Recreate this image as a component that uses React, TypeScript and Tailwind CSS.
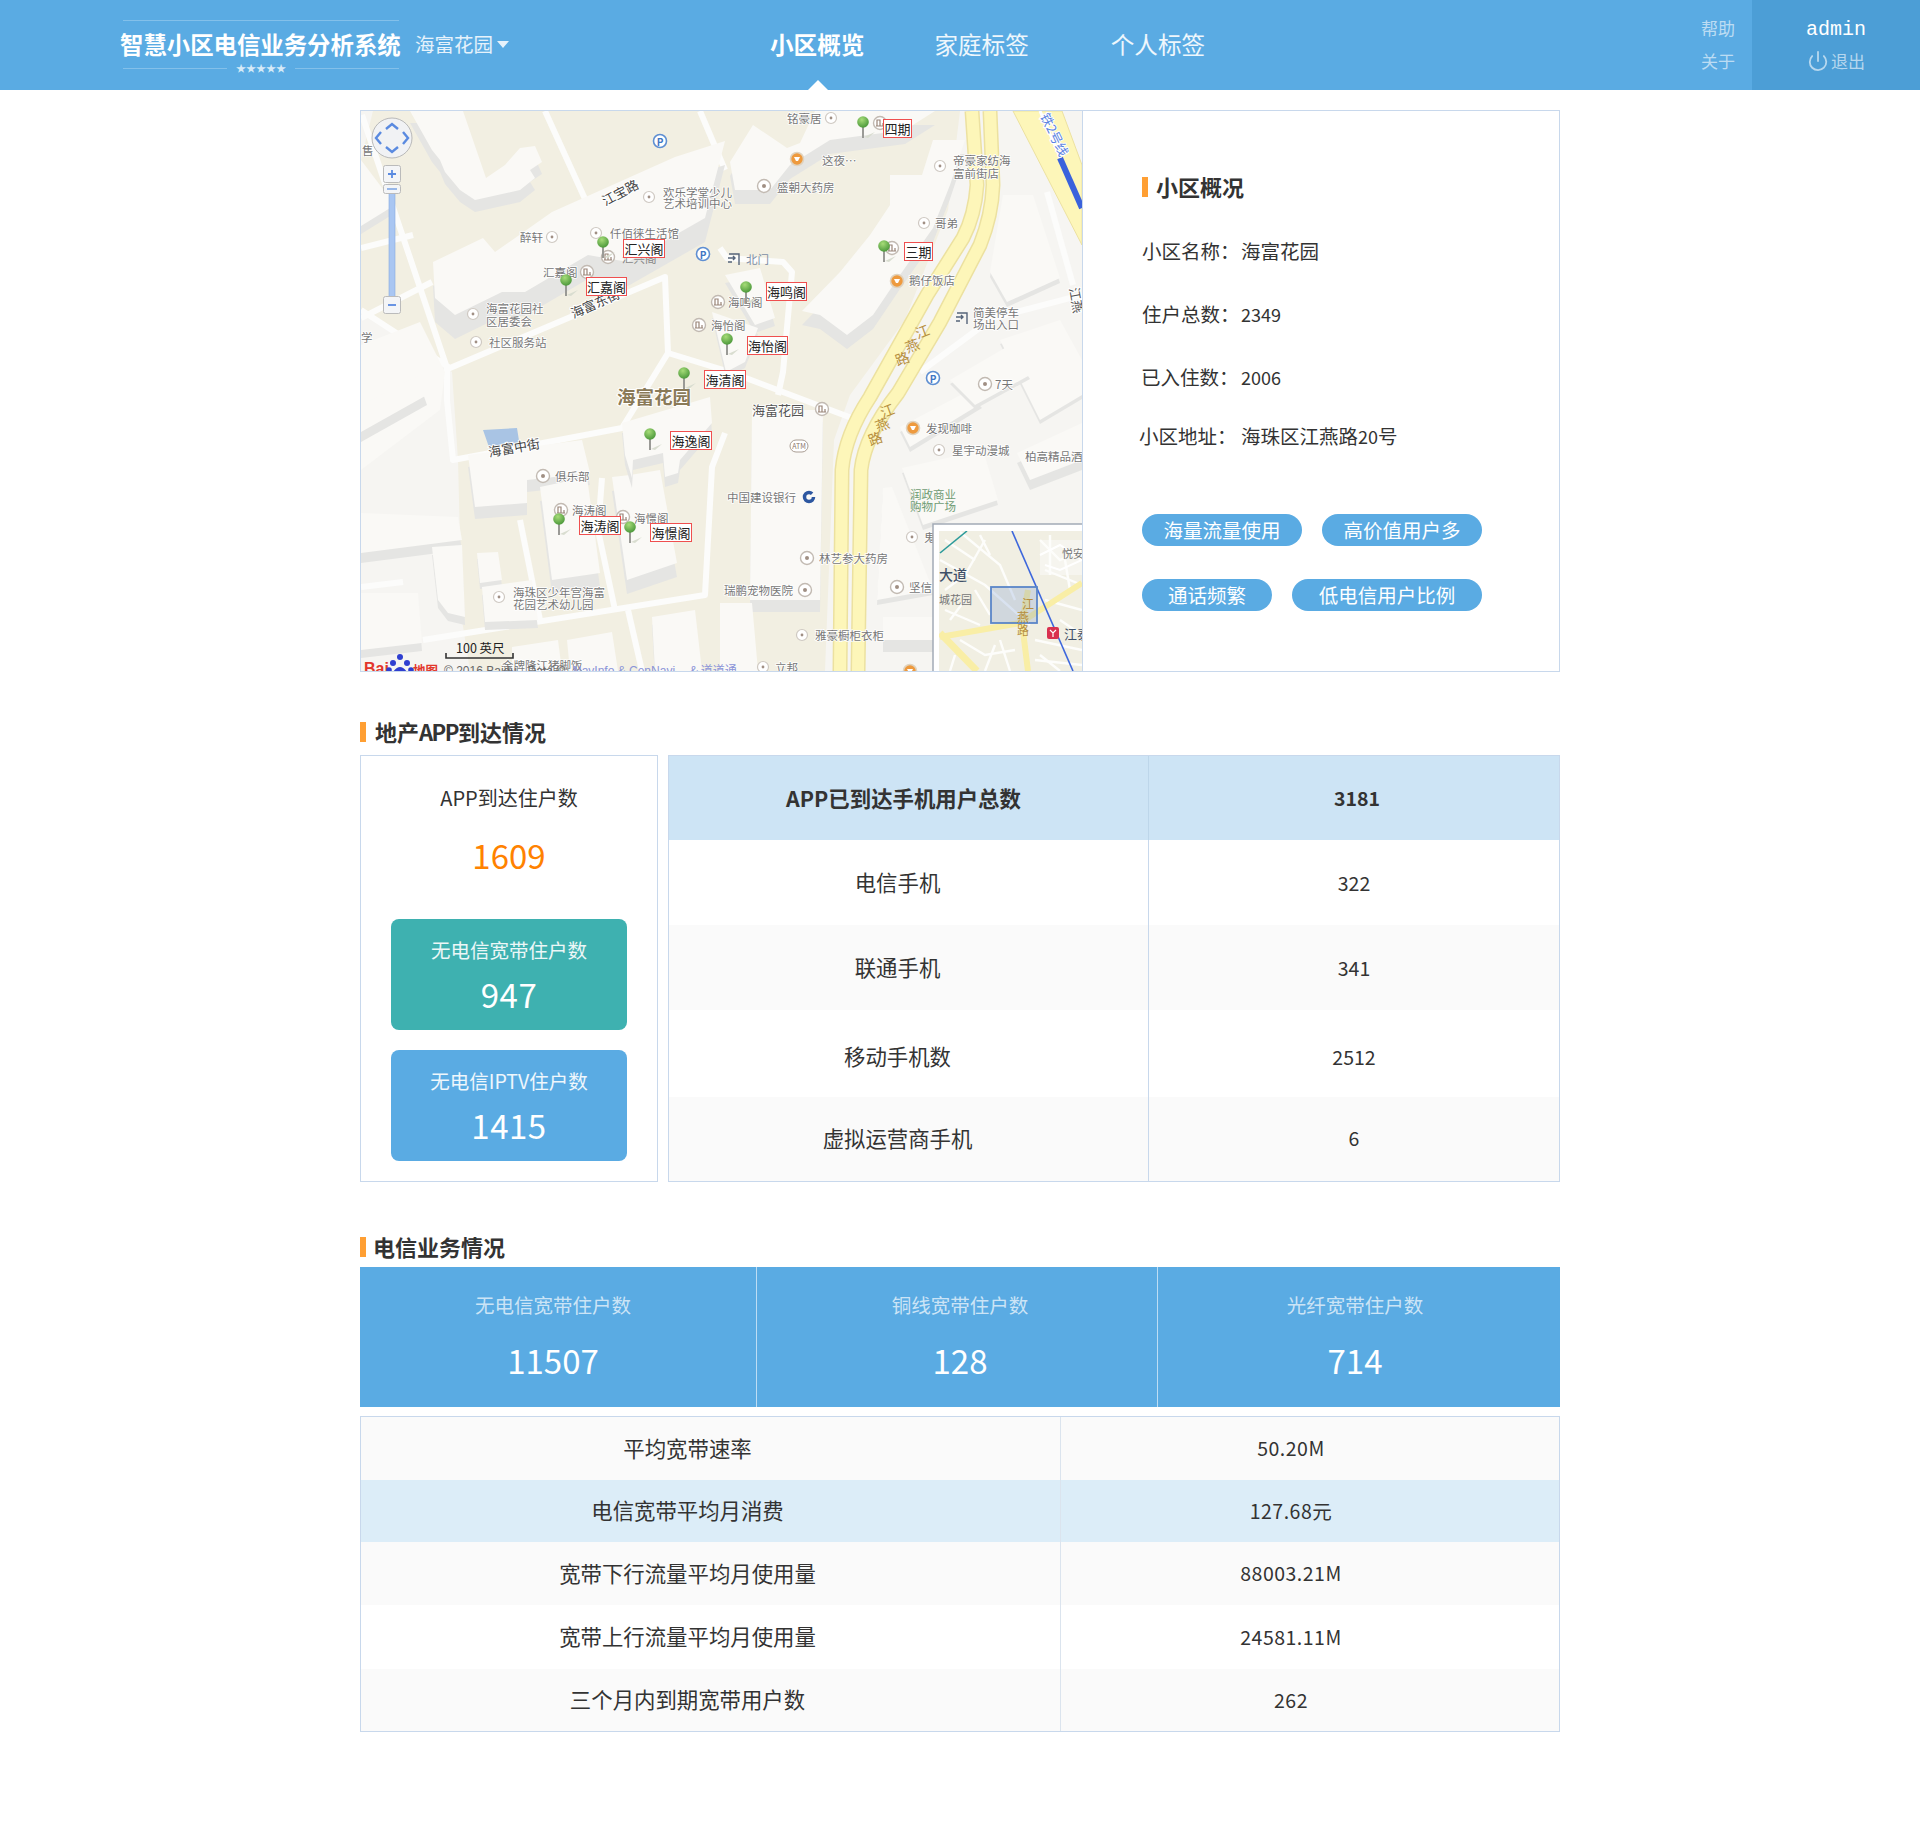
import type { ReactNode } from "react";
import { Power } from "lucide-react";

type Pt = [number, number];
const pts = (p: Pt[]) => p.map((q) => q.join(",")).join(" ");

// building: top face plus a grey side shifted downward
const buildings: { p: Pt[]; d: number }[] = [
    { p: [[410, 111], [463, 111], [486, 178], [505, 165], [520, 148], [535, 146], [542, 162], [530, 170], [535, 178], [520, 190], [475, 200], [460, 190], [445, 172], [440, 160], [432, 150]], d: 12 },
    { p: [[433, 262], [483, 238], [495, 252], [552, 212], [675, 157], [725, 141], [705, 218], [628, 262], [588, 255], [525, 292], [502, 292], [455, 315], [435, 298]], d: 24 },
    { p: [[730, 162], [753, 125], [787, 148], [800, 143], [815, 111], [935, 111], [905, 130], [830, 140], [790, 165], [770, 190], [735, 190]], d: 14 },
    { p: [[890, 175], [922, 175], [933, 140], [965, 140], [950, 185], [933, 228], [900, 275], [873, 315], [847, 335], [820, 315], [802, 311], [840, 272], [870, 235], [890, 205]], d: 14 },
    { p: [[468, 455], [582, 440], [590, 473], [527, 480], [527, 503], [475, 507]], d: 12 },
    { p: [[540, 487], [587, 477], [600, 573], [552, 580]], d: 14 },
    { p: [[612, 477], [630, 475], [660, 470], [677, 563], [627, 580]], d: 14 },
    { p: [[622, 423], [710, 397], [712, 423], [680, 460], [678, 473], [665, 477], [663, 453], [633, 460], [632, 478], [625, 455]], d: 10 },
    { p: [[477, 553], [498, 552], [502, 580], [480, 583]], d: 6 },
    { p: [[482, 587], [532, 580], [538, 620], [485, 622]], d: 8 },
    { p: [[361, 513], [458, 517], [462, 540], [361, 553]], d: 10 },
    { p: [[361, 593], [418, 593], [422, 643], [361, 650]], d: 8 },
    { p: [[432, 547], [462, 545], [465, 617], [448, 613], [438, 600]], d: 8 },
    { p: [[725, 275], [760, 268], [775, 318], [755, 325]], d: 8 },
    { p: [[712, 312], [758, 328], [745, 362], [726, 372]], d: 6 },
    { p: [[752, 410], [823, 410], [820, 600], [750, 600]], d: 12 },
    { p: [[902, 468], [983, 450], [998, 500], [923, 525]], d: 5 },
    { p: [[883, 488], [892, 487], [933, 590], [877, 600]], d: 5 },
    { p: [[1017, 453], [1082, 423], [1082, 460], [1030, 480]], d: 10 },
    { p: [[720, 603], [752, 603], [758, 671], [720, 671]], d: 0 },
    { p: [[883, 617], [933, 617], [933, 640], [883, 640]], d: 12 },
    { p: [[900, 427], [970, 390], [982, 403], [910, 447]], d: 5 },
    { p: [[512, 647], [558, 640], [562, 671], [512, 671]], d: 0 },
    { p: [[567, 640], [612, 632], [618, 671], [570, 671]], d: 0 },
    { p: [[652, 617], [695, 610], [702, 671], [655, 671]], d: 8 },
    { p: [[990, 272], [1003, 195], [1033, 195], [1060, 278], [1007, 302]], d: 5 },
    { p: [[361, 160], [395, 205], [361, 226]], d: 8 },
    { p: [[361, 345], [420, 322], [445, 372], [440, 410], [361, 470]], d: 0 },
    { p: [[361, 405], [420, 375], [427, 395], [361, 432]], d: 10 },
    { p: [[1000, 340], [1060, 320], [1082, 360], [1082, 395], [1040, 420]], d: 4 },
    { p: [[950, 380], [1010, 345], [1030, 375], [975, 405]], d: 4 },
];

const roads: Pt[][] = [
    [[362, 115], [447, 368], [447, 400], [453, 460], [622, 428], [668, 353], [665, 277], [450, 368], [361, 310]],
    [[361, 248], [413, 235]],
    [[361, 318], [432, 282]],
    [[545, 111], [590, 210]],
    [[668, 353], [730, 372], [857, 420]],
    [[720, 248], [727, 258], [783, 262], [792, 272], [783, 372], [778, 395]],
    [[423, 640], [705, 595], [712, 467], [725, 433]],
    [[602, 478], [598, 530], [615, 610]],
    [[520, 520], [540, 620]],
    [[628, 610], [642, 671]],
    [[361, 587], [403, 582]],
    [[920, 372], [993, 318], [1082, 295]],
    [[1047, 192], [1073, 285]],
    [[725, 170], [700, 111]],
];

const dots: Pt[] = [[649, 197], [552, 237], [596, 233], [473, 314], [476, 342], [499, 597], [831, 118], [940, 166], [924, 223], [939, 450], [912, 537], [802, 635], [763, 667]];
const shops: Pt[] = [[608, 257], [587, 272], [561, 510], [623, 517], [880, 123], [892, 248], [718, 302], [699, 325], [822, 409]];
const plain: Pt[] = [[543, 476], [764, 186], [985, 384], [807, 558], [805, 590], [897, 587]];
const oranges: Pt[] = [[797, 159], [897, 281], [913, 428], [910, 671]];
const parking: Pt[] = [[660, 141], [703, 254], [933, 378]];
const exits: Pt[] = [[734, 259], [962, 318]];
const pins: Pt[] = [[603, 242], [566, 280], [684, 373], [746, 287], [727, 339], [863, 122], [884, 246], [650, 434], [559, 519], [630, 527]];

const poi: [string, number, number][] = [
    ["欢乐学堂少儿", 663, 192], ["艺术培训中心", 663, 203], ["醉轩", 520, 237], ["仟佰徕生活馆", 610, 233],
    ["汇嘉阁", 543, 272], ["海富花园社", 486, 308], ["区居委会", 486, 321], ["社区服务站", 489, 342],
    ["俱乐部", 555, 476], ["海涛阁", 572, 510], ["海憬阁", 634, 518], ["海珠区少年宫海富", 513, 592], ["花园艺术幼儿园", 513, 604],
    ["铭豪居", 787, 118], ["这夜…", 822, 160], ["盛朝大药房", 777, 187], ["帝豪家纺海", 953, 160], ["富前街店", 953, 173],
    ["哥弟", 935, 223], ["鹅仔饭店", 909, 280], ["海鸣阁", 728, 302], ["海怡阁", 711, 325], ["简美停车", 973, 312], ["场出入口", 973, 324],
    ["7天", 995, 384], ["发现咖啡", 926, 428], ["星宇动漫城", 952, 450], ["柏高精品酒", 1025, 456], ["中国建设银行", 727, 497],
    ["林艺参大药房", 819, 558], ["瑞鹏宠物医院", 724, 590], ["鬼", 924, 537], ["坚信", 909, 587], ["雅豪橱柜衣柜", 815, 635],
    ["立邦", 775, 667], ["售", 362, 150], ["学", 361, 337], ["金牌隆江猪脚饭", 502, 665],
];

const tags: [string, number, number, number][] = [
    ["汇兴阁", 623, 239, 42], ["汇嘉阁", 586, 277, 41], ["海清阁", 704, 370, 42], ["海鸣阁", 766, 282, 41], ["海怡阁", 747, 336, 41],
    ["四期", 883, 119, 29], ["三期", 904, 242, 29], ["海逸阁", 670, 431, 42], ["海涛阁", 579, 516, 42], ["海憬阁", 650, 523, 42],
];

const miniRoads: Pt[][] = [
    [[940, 560], [985, 585], [1030, 625]], [[960, 532], [1000, 565], [1015, 600]], [[985, 540], [965, 575], [945, 590]],
    [[1040, 540], [1060, 560], [1082, 550]], [[1045, 570], [1082, 585]], [[1000, 640], [1010, 671]], [[960, 640], [985, 655], [1015, 650]],
    [[1035, 640], [1082, 650]], [[1040, 655], [1060, 671]], [[945, 610], [980, 625]], [[1050, 535], [1050, 575]], [[1065, 560], [1070, 590]],
    [[975, 590], [990, 615]], [[955, 655], [950, 671]], [[980, 535], [990, 555]], [[945, 540], [975, 560]], [[950, 620], [965, 600]],
    [[995, 645], [985, 671]], [[1045, 600], [1082, 610]], [[1060, 620], [1082, 635]], [[1035, 660], [1082, 665]],
];

const Road = ({ d }: { d: string }) => (
    <>
        <path d={d} fill="none" stroke="#ece1a0" strokeWidth="15" />
        <path d={d} fill="none" stroke="#fdf6b9" strokeWidth="12" />
    </>
);

function BaiduMap() {
    const strip1 = "M972 111 L977 185 Q975 215 963 238 L927 295 L870 397 Q845 435 842 470 L840 672";
    const strip2 = "M990 111 L993 185 Q992 215 980 245 L940 322 L898 393 Q865 435 861 470 L858 672";
    return (
        <svg viewBox="361 111 721 560" className="block h-full w-full">
            <defs>
                <radialGradient id="pin" cx="0.4" cy="0.3" r="0.8">
                    <stop offset="0" stopColor="#a6dc78" />
                    <stop offset="1" stopColor="#3f8f32" />
                </radialGradient>
                <clipPath id="mini">
                    <rect x="939" y="531" width="143" height="140" />
                </clipPath>
            </defs>
            <rect x="361" y="111" width="721" height="560" fill="#f6f5f2" />
            <polygon points="361,160 361,250 412,235 373,111" fill="#f2efe2" />
            <polygon points={pts([[373, 111], [960, 111], [948, 210], [905, 320], [850, 395], [834, 440], [825, 671], [470, 671], [462, 620], [458, 460], [452, 372], [361, 310], [361, 250]])} fill="#f2efe2" />
            {roads.map((r, i) => (
                <polyline key={i} points={pts(r)} fill="none" stroke="#fcfcfb" strokeWidth="6" strokeLinejoin="round" />
            ))}
            {buildings.map((b, i) => (
                <g key={i}>
                    {b.d > 0 && <polygon points={pts(b.p.map(([x, y]) => [x, y + b.d] as Pt))} fill="#e5e5e3" />}
                    <polygon points={pts(b.p)} fill="#faf9f6" />
                </g>
            ))}
            <polygon points="483,430 517,428 520,447 503,445 490,450" fill="#a9c4e4" />
            <Road d={strip1} />
            <Road d={strip2} />
            <polygon points="1013,111 1062,111 1082,165 1082,245" fill="#fdf6b9" stroke="#ece1a0" />
            <polyline points="1040,111 1082,208" fill="none" stroke="#fff" strokeWidth="3" />
            <polyline points="1060,158 1082,208" fill="none" stroke="#3a62dc" strokeWidth="6" />
            <text x="1040" y="116" fontSize="13" fill="#5b82e0" stroke="#fff" strokeWidth="2" paintOrder="stroke" transform="rotate(64 1040 116)">铁2号线</text>

            {poi.map(([t, x, y]) => (
                <text key={t + x} x={x} y={y} fontSize="11.5" fill="#777" stroke="#fff" strokeWidth="1.5" paintOrder="stroke" dominantBaseline="central">{t}</text>
            ))}
            <text x="622" y="258" fontSize="11.5" fill="#888" dominantBaseline="central">汇兴阁</text>
            <text x="746" y="259" fontSize="11.5" fill="#7d8ea6" dominantBaseline="central">北门</text>
            <text x="910" y="494" fontSize="11.5" fill="#6f9c74" dominantBaseline="central">润政商业</text>
            <text x="910" y="506" fontSize="11.5" fill="#6f9c74" dominantBaseline="central">购物广场</text>
            <text x="752" y="409" fontSize="13" fill="#555" stroke="#fff" strokeWidth="1.5" paintOrder="stroke" dominantBaseline="central">海富花园</text>
            <text x="617" y="396" fontSize="18.5" fontWeight="700" fill="#8a7a58" stroke="#fff" strokeWidth="2" paintOrder="stroke" dominantBaseline="central">海富花园</text>

            <text x="620" y="192" fontSize="13" fill="#444" stroke="#fff" strokeWidth="2" paintOrder="stroke" textAnchor="middle" dominantBaseline="central" transform="rotate(-28 620 192)">江宝路</text>
            <text x="595" y="303" fontSize="13" fill="#444" stroke="#fff" strokeWidth="2" paintOrder="stroke" textAnchor="middle" dominantBaseline="central" transform="rotate(-24 595 303)">海富东街</text>
            <text x="514" y="447" fontSize="13" fill="#444" stroke="#fff" strokeWidth="2" paintOrder="stroke" textAnchor="middle" dominantBaseline="central" transform="rotate(-10 514 447)">海富中街</text>
            <text x="1077" y="300" fontSize="13" fill="#555" stroke="#fff" strokeWidth="2" paintOrder="stroke" textAnchor="middle" dominantBaseline="central" transform="rotate(80 1077 300)">江燕</text>
            {([["江", 922, 331], ["燕", 912, 345], ["路", 902, 358], ["江", 887, 410], ["燕", 882, 424], ["路", 875, 438]] as [string, number, number][]).map(([t, x, y]) => (
                <text key={t + x} x={x} y={y} fontSize="14" fill="#b68f3e" textAnchor="middle" dominantBaseline="central" transform={`rotate(-20 ${x} ${y})`}>{t}</text>
            ))}

            {dots.map(([x, y]) => (
                <g key={x * y}>
                    <circle cx={x} cy={y} r="5.5" fill="#fff" stroke="#cfc9c2" strokeWidth="1.2" />
                    <circle cx={x} cy={y} r="1.4" fill="#a08f84" />
                </g>
            ))}
            {shops.map(([x, y]) => (
                <g key={x * y}>
                    <circle cx={x} cy={y} r="6.5" fill="#fff" stroke="#c2bab2" strokeWidth="1.4" />
                    <path d={`M${x - 3} ${y + 3}V${y - 3}H${x}V${y + 3}M${x + 3} ${y + 3}V${y}M${x - 4} ${y + 3}H${x + 4}`} fill="none" stroke="#9a8578" strokeWidth="1.2" />
                </g>
            ))}
            {plain.map(([x, y]) => (
                <g key={x * y}>
                    <circle cx={x} cy={y} r="6.5" fill="#fff" stroke="#c2bab2" strokeWidth="1.4" />
                    <circle cx={x} cy={y} r="2" fill="#a08f84" />
                </g>
            ))}
            {oranges.map(([x, y]) => (
                <g key={x * y}>
                    <circle cx={x} cy={y} r="6.5" fill="#ee9a3e" stroke="#e0d3bf" strokeWidth="1.6" />
                    <path d={`M${x - 3} ${y - 2}H${x + 3}L${x + 1} ${y + 2}H${x - 1}Z`} fill="#fff" />
                </g>
            ))}
            {parking.map(([x, y]) => (
                <g key={x * y}>
                    <circle cx={x} cy={y} r="6.5" fill="#fff" stroke="#5f8fd2" strokeWidth="1.6" />
                    <text x={x} y={y + 0.5} fontSize="10" fontWeight="700" fill="#3f76c4" textAnchor="middle" dominantBaseline="central">P</text>
                </g>
            ))}
            {exits.map(([x, y]) => (
                <path key={x} d={`M${x - 6} ${y - 1}H${x + 1}M${x - 1} ${y - 3}L${x + 1} ${y - 1}L${x - 1} ${y + 1}M${x - 5} ${y - 5}H${x + 5}V${y + 6}M${x - 6} ${y + 3}H${x - 2}`} fill="none" stroke="#55647a" strokeWidth="1.4" />
            ))}
            <rect x="790" y="440" width="18" height="12" rx="6" fill="#fff" stroke="#a99d93" />
            <text x="799" y="446" fontSize="7" fill="#8a7468" textAnchor="middle" dominantBaseline="central">ATM</text>
            <circle cx="809" cy="497" r="4.5" fill="none" stroke="#2d57a0" strokeWidth="3.5" strokeDasharray="24 5" />

            {pins.map(([x, y]) => (
                <g key={x * y}>
                    <polygon points={`${x + 1},${y + 15} ${x + 12},${y + 10} ${x + 5},${y + 16}`} fill="#d9ddd0" />
                    <line x1={x} y1={y + 3} x2={x} y2={y + 16} stroke="#9a9a96" strokeWidth="2" />
                    <circle cx={x} cy={y} r="5.8" fill="url(#pin)" />
                </g>
            ))}
            {tags.map(([t, x, y, w]) => (
                <g key={t + x}>
                    <rect x={x + 0.5} y={y + 0.5} width={w - 1} height="18" fill="#fff" stroke="#ef4f4f" />
                    <text x={x + w / 2} y={y + 9.5} fontSize="13" fill="#222" textAnchor="middle" dominantBaseline="central">{t}</text>
                </g>
            ))}

            {/* navigation control */}
            <circle cx="392" cy="138" r="20" fill="#f1f2f4" stroke="#b9b9b9" />
            <path d="M386 129l6-5 6 5M386 147l6 5 6-5M381 132l-5 6 5 6M403 132l5 6-5 6" fill="none" stroke="#5a8ae0" strokeWidth="2.4" />
            <rect x="389" y="192" width="6" height="106" fill="#a9c6f2" stroke="#86a8dc" strokeWidth="0.6" />
            <rect x="383.5" y="165.5" width="17" height="17" rx="2" fill="#f4f5f7" stroke="#bbb" />
            <path d="M388 174h8M392 170v8" stroke="#5a8ae0" strokeWidth="1.8" />
            <rect x="383.5" y="184.5" width="17" height="9" rx="2" fill="#f4f5f7" stroke="#bbb" />
            <path d="M387 189h10" stroke="#8eb0e6" strokeWidth="1.8" />
            <rect x="383.5" y="296.5" width="17" height="17" rx="2" fill="#f4f5f7" stroke="#bbb" />
            <path d="M388 305h8" stroke="#5a8ae0" strokeWidth="1.8" />

            {/* scale and logo */}
            <text x="456" y="647" fontSize="12.5" fill="#222" dominantBaseline="central">100 英尺</text>
            <path d="M446 653v5h67v-5" fill="none" stroke="#333" strokeWidth="1.6" />
            <text x="364" y="674" fontSize="16" fontWeight="700" fill="#e2362b" fontFamily="Liberation Sans">Bai</text>
            <g fill="#2f3fd0">
                <circle cx="393" cy="663" r="3" /><circle cx="400" cy="657" r="3" /><circle cx="407" cy="663" r="3" />
                <circle cx="389" cy="670" r="2.8" /><circle cx="411" cy="670" r="2.8" />
                <path d="M393 672q7-10 14 0v4h-14z" />
            </g>
            <text x="413" y="675" fontSize="12.5" fontWeight="700" fill="#e2362b">地图</text>
            <text x="444" y="675" fontSize="12" fill="#666" fontFamily="Liberation Sans">© 2016 Baidu - Data ©</text>
            <text x="573" y="675" fontSize="12" fill="#8a94d8" fontFamily="Liberation Sans">NavInfo &amp; CenNavi</text>
            <text x="690" y="675" fontSize="12" fill="#8a94d8">&amp; 道道通</text>

            {/* inset overview */}
            <rect x="933" y="524" width="160" height="160" fill="#fff" stroke="#a2aab6" strokeWidth="1.5" />
            <g clipPath="url(#mini)">
                <rect x="939" y="531" width="143" height="140" fill="#f1efe3" />
                <rect x="1040" y="540" width="42" height="35" fill="#f6f5ef" />
                {miniRoads.map((r, i) => (
                    <polyline key={i} points={pts(r)} fill="none" stroke="#fdfdfb" strokeWidth="2.4" />
                ))}
                <polyline points="1040,555 1060,545 1082,560 1060,570 1045,565" fill="none" stroke="#fff" strokeWidth="2" />
                <polyline points="940,633 977,671" fill="none" stroke="#f9eea6" strokeWidth="7" />
                <polyline points="940,637 1020,623 1082,583" fill="none" stroke="#f9eea6" strokeWidth="6" />
                <polyline points="1028,590 1022,623 1028,671" fill="none" stroke="#f9eea6" strokeWidth="6" />
                <polyline points="940,553 967,531" fill="none" stroke="#2c9a9a" strokeWidth="1.6" />
                <polyline points="1012,531 1073,671" fill="none" stroke="#3d67dc" strokeWidth="1.6" />
                <rect x="991" y="587" width="46" height="36" fill="#5a86c8" fillOpacity="0.22" stroke="#5a86c8" strokeWidth="1.8" />
                <text x="939" y="574" fontSize="14" fontWeight="500" fill="#3f5068" dominantBaseline="central">大道</text>
                <text x="939" y="599" fontSize="11" fill="#777" dominantBaseline="central">城花园</text>
                <text x="1062" y="553" fontSize="11" fill="#777" dominantBaseline="central">悦安</text>
                <text x="1028" y="603" fontSize="12" fill="#b68f3e" textAnchor="middle" dominantBaseline="central">江</text>
                <text x="1023" y="616" fontSize="12" fill="#b68f3e" textAnchor="middle" dominantBaseline="central">燕</text>
                <text x="1023" y="629" fontSize="12" fill="#b68f3e" textAnchor="middle" dominantBaseline="central">路</text>
                <rect x="1047" y="627" width="12" height="12" rx="2" fill="#d9304f" />
                <path d="M1050 630l3 3 3-3M1053 633v4" fill="none" stroke="#fff" strokeWidth="1.2" />
                <text x="1064" y="633" fontSize="13" fill="#3f5068" dominantBaseline="central">江泰</text>
            </g>
        </svg>
    );
}

function SectionTitle({ children, gap }: { children: ReactNode; gap: string }) {
    return (
        <div className={`flex h-5 items-center ${gap}`}>
            <span className="h-5 w-1.5 bg-[#ff9f33]" />
            <h2 className="-mt-[2px] text-[22px] leading-5 font-bold text-[#333]">{children}</h2>
        </div>
    );
}

function StatBox({ label, value, color }: { label: string; value: string; color: string }) {
    return (
        <div className={`flex h-[111px] w-[236px] flex-col items-center rounded-lg pt-[18px] text-white ${color}`}>
            <div className="text-[19.5px] leading-[26px] text-white/90">{label}</div>
            <div className="mt-[12px] text-[33px] leading-[38px] tracking-[0.5px]">{value}</div>
        </div>
    );
}

const appRows = [
    { k: "电信手机", v: "322", h: "h-[85px]", bg: "bg-white", pad: "" },
    { k: "联通手机", v: "341", h: "h-[85px]", bg: "bg-[#fafafa]", pad: "" },
    { k: "移动手机数", v: "2512", h: "h-[87px]", bg: "bg-white", pad: "pt-[6px]" },
    { k: "虚拟运营商手机", v: "6", h: "h-[84px]", bg: "bg-[#fafafa]", pad: "pb-[2px]" },
];

const bandRows = [
    { k: "平均宽带速率", v: "50.20M", h: "h-[63px]", bg: "bg-[#fafafa]" },
    { k: "电信宽带平均月消费", v: "127.68元", h: "h-[62px]", bg: "bg-[#dcedf8]" },
    { k: "宽带下行流量平均月使用量", v: "88003.21M", h: "h-[63px]", bg: "bg-[#fafafa]" },
    { k: "宽带上行流量平均月使用量", v: "24581.11M", h: "h-[64px]", bg: "bg-white" },
    { k: "三个月内到期宽带用户数", v: "262", h: "h-[62px]", bg: "bg-[#fafafa]" },
];

const bandStats = [
    { k: "无电信宽带住户数", v: "11507", w: "w-[397px]", pad: "pr-[10px]" },
    { k: "铜线宽带住户数", v: "128", w: "w-[401px]", pad: "pl-[6px]" },
    { k: "光纤宽带住户数", v: "714", w: "w-[402px]", pad: "pr-[8px]" },
];

export default function App() {
    return (
        <div className="min-h-[1844px] bg-white font-['Noto_Sans_CJK_SC','Liberation_Sans',sans-serif] text-[#333]">
            <header className="relative flex h-[90px] items-start bg-[#5aabe3] text-white">
                <div className="ml-[120px] w-[281px] pt-5">
                    <div className="ml-[3px] h-px w-[276px] bg-white/25" />
                    <div className="mt-[7px] text-[23.4px] leading-8 font-bold whitespace-nowrap">智慧小区电信业务分析系统</div>
                    <div className="ml-[3px] flex h-[16px] w-[276px] items-center justify-between">
                        <span className="h-px w-[104px] bg-white/25" />
                        <span className="text-[10px] leading-none text-white/75">★★★★★</span>
                        <span className="h-px w-[104px] bg-white/25" />
                    </div>
                </div>
                <div className="ml-[14px] flex h-[88px] items-center gap-1 text-[19.5px] text-white/85">
                    海富花园
                    <span className="h-0 w-0 border-x-[6px] border-t-[7px] border-x-transparent border-t-white/85" />
                </div>
                <nav className="ml-[261px] flex h-[90px] items-center text-[23.6px]">
                    <a className="font-bold">小区概览</a>
                    <a className="ml-[70px] text-white/90">家庭标签</a>
                    <a className="ml-[82px] text-white/90">个人标签</a>
                </nav>
                <div className="mr-[17px] ml-auto flex h-[90px] flex-col items-center pt-[16px] text-[17px] leading-6 text-white/60">
                    <a>帮助</a>
                    <a className="mt-[9px]">关于</a>
                </div>
                <div className="flex h-[90px] w-[168px] flex-col items-center bg-[#4c9ed6] pt-[16px]">
                    <div className="font-['Liberation_Mono',monospace] text-[20px] leading-7">admin</div>
                    <div className="mt-[5px] flex items-center gap-[2px] text-[17px] leading-6 text-white/60">
                        <Power size={22} strokeWidth={2} />
                        退出
                    </div>
                </div>
                <span className="absolute bottom-0 left-[808px] h-0 w-0 border-x-[10px] border-b-[10px] border-x-transparent border-b-white" />
            </header>

            <main className="mx-auto w-[1200px] pt-5 pb-[112px]">
                <section className="flex h-[562px] border border-[#c8d8ec]">
                    <div className="h-full w-[721px] shrink-0 overflow-hidden">
                        <BaiduMap />
                    </div>
                    <div className="relative flex-1 border-l border-[#c8d8ec] pt-[66px] pl-[59px]">
                        <div className="flex h-5 items-center gap-2">
                            <span className="h-5 w-1.5 bg-[#ff9f33]" />
                            <h2 className="-mt-[2px] text-[22px] leading-5 font-bold">小区概况</h2>
                        </div>
                        <div className="mt-[42px] flex h-6 items-center text-[19.5px]">
                            <span className="w-[99px]">小区名称：</span>海富花园
                        </div>
                        <div className="mt-[39px] flex h-6 items-center text-[19.5px]">
                            <span className="w-[99px]">住户总数：</span>
                            <span className="text-[18px]">2349</span>
                        </div>
                        <div className="mt-[39px] flex h-6 items-center text-[19.5px]">
                            <span className="-ml-px w-[100px]">已入住数：</span>
                            <span className="text-[18px]">2006</span>
                        </div>
                        <div className="mt-[35px] flex h-6 items-center text-[19.5px]">
                            <span className="-ml-[3px] w-[102px]">小区地址：</span>海珠区江燕路<span className="text-[18px]">20</span>号
                        </div>
                        <div className="mt-[66px] flex gap-5 text-[19.5px] leading-8 text-white">
                            <span className="w-[160px] rounded-full bg-[#5aabe3] text-center">海量流量使用</span>
                            <span className="w-[160px] rounded-full bg-[#5aabe3] text-center">高价值用户多</span>
                        </div>
                        <div className="mt-[33px] flex gap-5 text-[19.5px] leading-8 text-white">
                            <span className="w-[130px] rounded-full bg-[#5aabe3] text-center">通话频繁</span>
                            <span className="w-[190px] rounded-full bg-[#5aabe3] text-center">低电信用户比例</span>
                        </div>
                    </div>
                </section>

                <div className="mt-[50px] mb-[13px]">
                    <SectionTitle gap="gap-[9px]">
                        地产<span className="tracking-[-1.5px]">APP</span>到达情况
                    </SectionTitle>
                </div>
                <section className="flex h-[427px] gap-2.5">
                    <div className="flex w-[298px] flex-col items-center border border-[#c8d8ec] pt-[26px]">
                        <div className="text-[20px] leading-8">APP到达住户数</div>
                        <div className="mt-[21px] text-[33px] leading-10 text-[#ff8200]">1609</div>
                        <div className="mt-[44px] flex flex-col gap-5">
                            <StatBox label="无电信宽带住户数" value="947" color="bg-[#3eb1b0]" />
                            <StatBox label="无电信IPTV住户数" value="1415" color="bg-[#5aabe3]" />
                        </div>
                    </div>
                    <div className="flex-1 border border-[#c8d8ec] text-[21.4px]">
                        <div className="flex h-[84px] items-center bg-[#cde4f5] font-bold">
                            <div className="flex h-full w-[480px] items-center justify-center border-r border-[#bdd6ea] pr-[10px]">APP已到达手机用户总数</div>
                            <div className="flex-1 pl-[6px] text-center text-[19.5px] font-semibold">3181</div>
                        </div>
                        {appRows.map((r) => (
                            <div key={r.k} className={`flex items-center ${r.h} ${r.bg}`}>
                                <div className={`flex h-full w-[480px] items-center justify-center border-r border-[#c8d8ec] pr-[22px] ${r.pad}`}>{r.k}</div>
                                <div className={`flex h-full flex-1 items-center justify-center text-[19.5px] ${r.pad}`}>{r.v}</div>
                            </div>
                        ))}
                    </div>
                </section>

                <div className="mt-[55px] mb-2.5">
                    <SectionTitle gap="gap-[7px]">电信业务情况</SectionTitle>
                </div>
                <section className="flex h-[140px] bg-[#5aabe3] text-white">
                    {bandStats.map((s, i) => (
                        <div key={s.k} className={`flex flex-col items-center pt-[24px] ${s.w} ${s.pad} ${i < 2 ? "border-r border-white/60" : ""}`}>
                            <div className="text-[19.5px] leading-7 text-white/70">{s.k}</div>
                            <div className="mt-[21px] text-[33px] leading-10">{s.v}</div>
                        </div>
                    ))}
                </section>
                <section className="mt-[9px] border border-[#c8d8ec] text-[21.4px]">
                    {bandRows.map((r) => (
                        <div key={r.k} className={`flex items-center ${r.h} ${r.bg}`}>
                            <div className="flex h-full w-[700px] items-center justify-center border-r border-[#dbe4ee] pr-[46px] pb-px">{r.k}</div>
                            <div className="flex-1 pr-[38px] pb-px text-center text-[19.5px] tracking-[0.5px]">{r.v}</div>
                        </div>
                    ))}
                </section>
            </main>
        </div>
    );
}
